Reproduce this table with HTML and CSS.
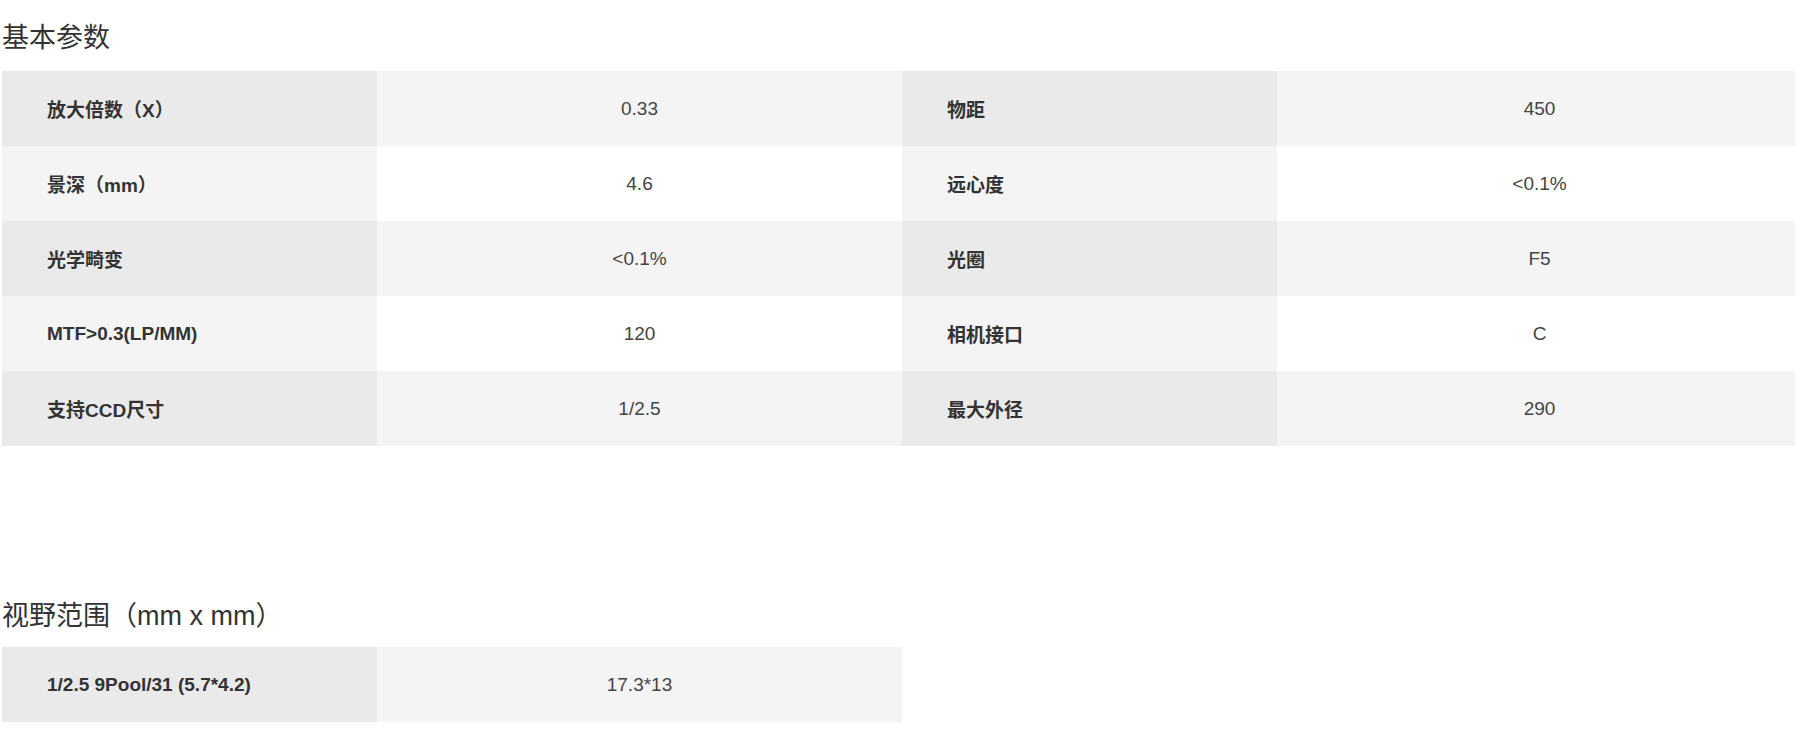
FILE: index.html
```html
<!DOCTYPE html>
<html lang="zh-CN">
<head>
<meta charset="utf-8">
<title>参数</title>
<link rel="stylesheet" href="styles.css">
</head>
<body>
<div class="page">
  <section class="block block-basic">
    <h2 class="block-title">基本参数</h2>
    <table class="spec spec-wide">
      <colgroup>
        <col class="c-label"><col class="c-value"><col class="c-label"><col class="c-value">
      </colgroup>
      <tbody>
        <tr><th>放大倍数（X）</th><td>0.33</td><th>物距</th><td>450</td></tr>
        <tr><th>景深（mm）</th><td>4.6</td><th>远心度</th><td>&lt;0.1%</td></tr>
        <tr><th>光学畸变</th><td>&lt;0.1%</td><th>光圈</th><td>F5</td></tr>
        <tr><th>MTF&gt;0.3(LP/MM)</th><td>120</td><th>相机接口</th><td>C</td></tr>
        <tr><th>支持CCD尺寸</th><td>1/2.5</td><th>最大外径</th><td>290</td></tr>
      </tbody>
    </table>
  </section>
  <section class="block block-fov">
    <h2 class="block-title">视野范围（mm x mm）</h2>
    <table class="spec spec-narrow">
      <colgroup>
        <col class="c-label"><col class="c-value">
      </colgroup>
      <tbody>
        <tr><th>1/2.5 9Pool/31 (5.7*4.2)</th><td>17.3*13</td></tr>
      </tbody>
    </table>
  </section>
</div>
</body>
</html>
```
FILE: styles.css
```css
html, body {
  margin: 0;
  padding: 0;
  background: #ffffff;
  overflow-x: hidden;
}

body {
  font-family: "Liberation Sans", Arial, "Noto Sans CJK SC", sans-serif;
  color: #333333;
}

.page {
  padding: 0 0 0 2px;
}

.block-title {
  margin: 0;
  font-size: 27px;
  font-weight: normal;
  line-height: 40px;
  height: 40px;
  color: #333333;
}

.block-basic .block-title {
  margin-top: 18px;
  margin-bottom: 13px;
}

.block-fov .block-title {
  margin-top: 150px;
  margin-bottom: 11px;
}

.spec {
  border-collapse: collapse;
  border-spacing: 0;
  table-layout: fixed;
}

.spec-wide {
  width: 1800px;
}

.spec-narrow {
  width: 900px;
}

.c-label {
  width: 375px;
}

.c-value {
  width: 525px;
}

.spec tr {
  height: 75px;
}

.spec th,
.spec td {
  padding: 0;
  height: 75px;
  vertical-align: middle;
  font-size: 19px;
  white-space: nowrap;
}

.spec th {
  text-align: left;
  padding-left: 45px;
  font-weight: bold;
  color: #333333;
}

.spec td {
  text-align: center;
  font-weight: normal;
  color: #444444;
}

.spec tr:nth-child(odd) th {
  background: #eaeaea;
}

.spec tr:nth-child(odd) td {
  background: #f4f4f4;
}

.spec tr:nth-child(even) th {
  background: #f4f4f4;
}

.spec tr:nth-child(even) td {
  background: #ffffff;
}
```
